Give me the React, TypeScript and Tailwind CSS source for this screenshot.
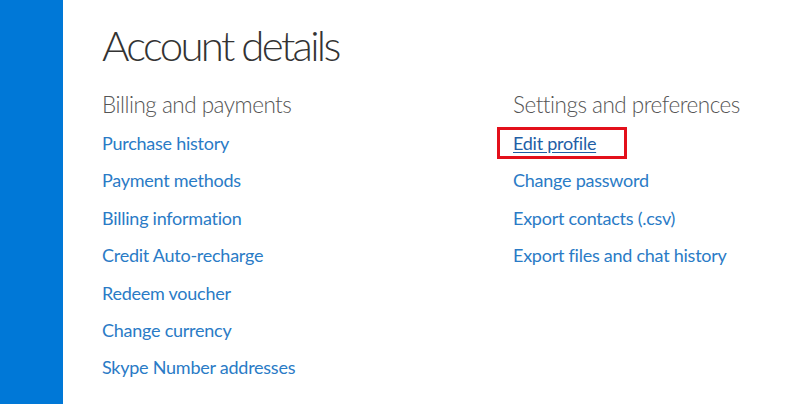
import React from "react";

const left = [
  "Purchase history",
  "Payment methods",
  "Billing information",
  "Credit Auto-recharge",
  "Redeem voucher",
  "Change currency",
  "Skype Number addresses",
];
const right = [
  "Edit profile",
  "Change password",
  "Export contacts (.csv)",
  "Export files and chat history",
];

function Column({ title, items, boxed }: { title: string; items: string[]; boxed?: string }) {
  return (
    <div className="flex flex-col">
      <h2 className="text-[22.5px] leading-[32px] font-light tracking-[-0.5px] text-[#555555]">{title}</h2>
      <ul className="mt-[4px] flex flex-col">
        {items.map((t) => (
          <li key={t} className="h-[37.4px] text-[18px] leading-[37.4px] tracking-[-0.25px]">
            {t === boxed ? (
              <span className="-ml-[16px] inline-block border-[3px] border-[#e3101b] pl-[13px] pr-[28px] leading-[26px] text-[#1f5fa6] underline underline-offset-2">
                {t}
              </span>
            ) : (
              <span className="text-[#2a7bc6]">{t}</span>
            )}
          </li>
        ))}
      </ul>
    </div>
  );
}

export default function App() {
  return (
    <div
      className="flex h-[404px] w-[800px] overflow-hidden bg-white"
      style={{ fontFamily: 'Lato, "Open Sans", sans-serif' }}
    >
      <div className="w-[63px] shrink-0 bg-[#0078d7]" />
      <div className="flex flex-1 flex-col pl-[39px] pt-[19px]">
        <h1 className="text-[42px] leading-[52px] font-light tracking-[-2.7px] text-[#333333]">Account details</h1>
        <div className="mt-[18px] flex">
          <div className="w-[411px]">
            <Column title="Billing and payments" items={left} />
          </div>
          <Column title="Settings and preferences" items={right} boxed="Edit profile" />
        </div>
      </div>
    </div>
  );
}
